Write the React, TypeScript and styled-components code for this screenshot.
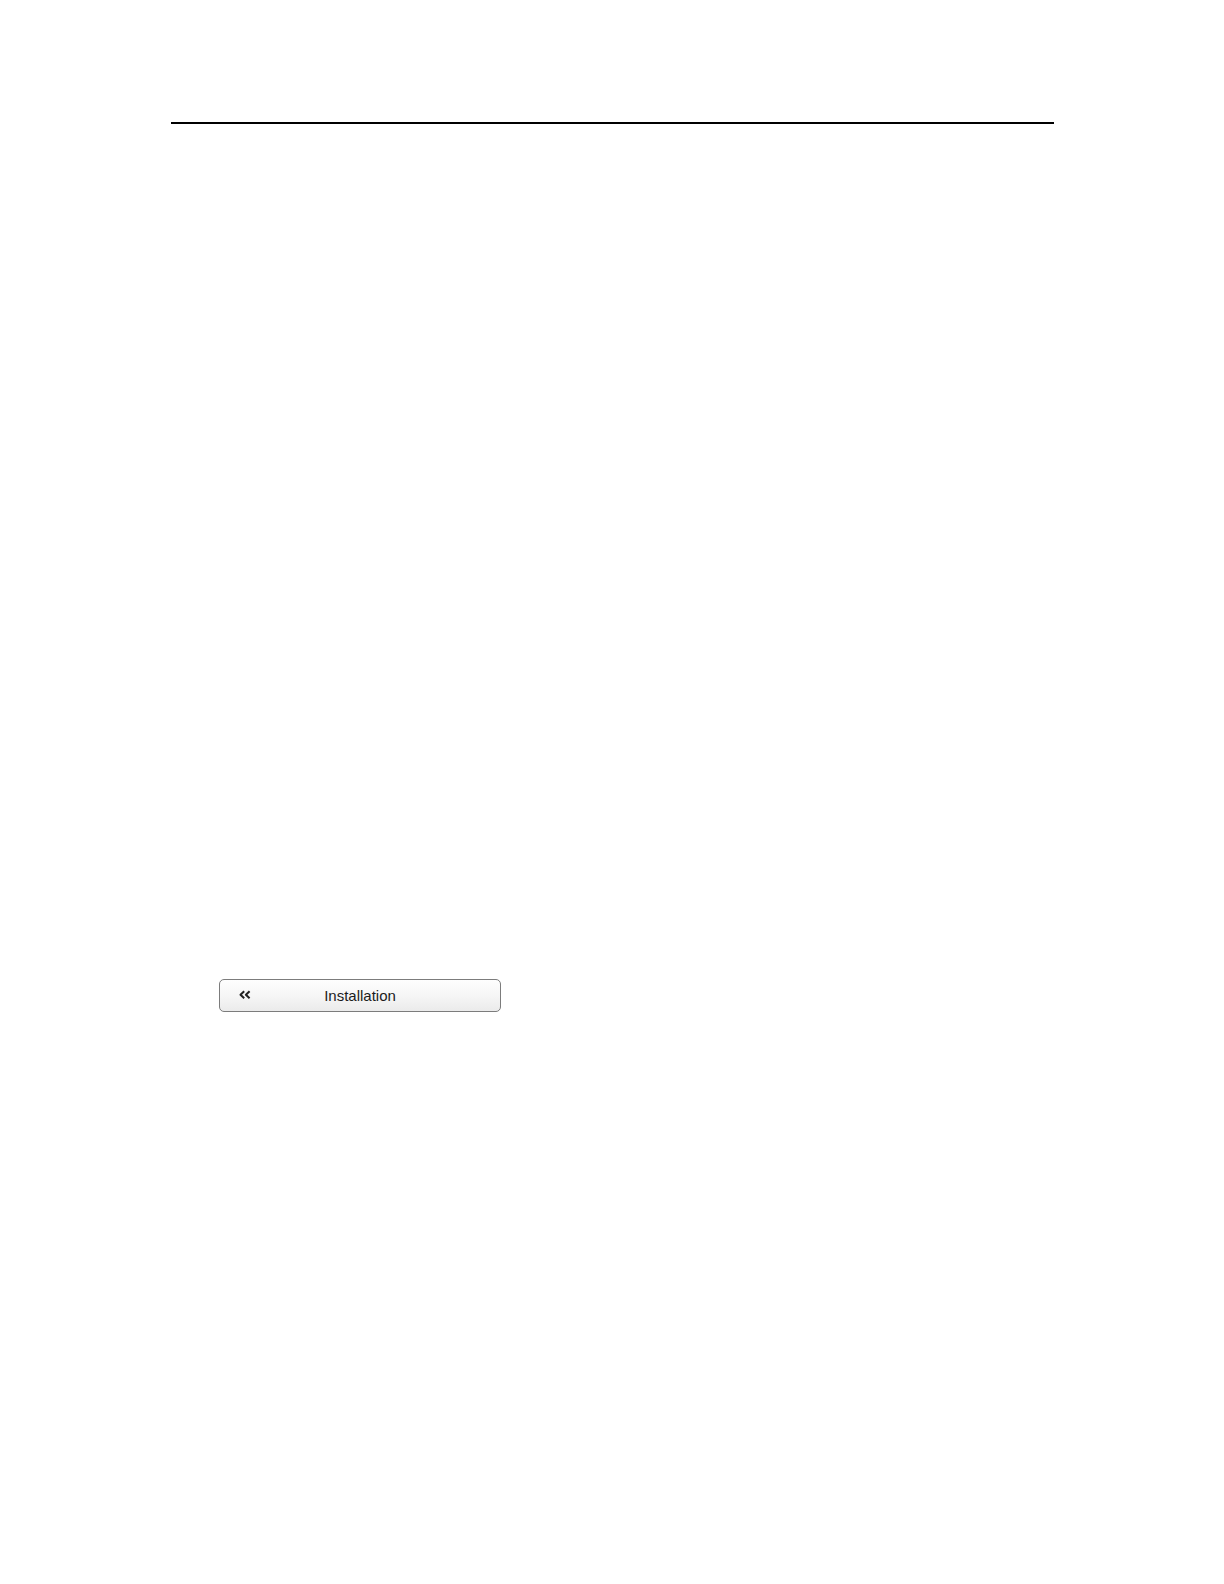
import React from "react";
import styled, { createGlobalStyle } from "styled-components";

const GlobalStyle = createGlobalStyle`
  body {
    margin: 0;
    background: #ffffff;
  }
`;

const Page = styled.main`
  box-sizing: border-box;
  min-height: 100vh;
  padding: 122px 170px 0 171px;
  font-family: "Liberation Sans", Arial, sans-serif;
`;

const Rule = styled.hr`
  height: 2px;
  margin: 0;
  border: 0;
  background: #000000;
`;

const Content = styled.section`
  padding: 855px 48px 0;
`;

const MenuButton = styled.button`
  box-sizing: border-box;
  display: grid;
  grid-template-columns: 32px 1fr 32px;
  align-items: center;
  width: 282px;
  max-width: 100%;
  height: 33px;
  padding: 0 18px;
  border: 1px solid #7c7c7c;
  border-radius: 5px;
  background: linear-gradient(#fefefe, #f6f6f6 50%, #ebebeb);
  color: #1c1c1c;
  font-family: inherit;
  font-size: 15px;
  line-height: 17px;
  text-align: center;
  cursor: pointer;
`;

const Chevrons = styled.svg`
  display: block;
  width: 14px;
  height: 13px;
  fill: none;
  stroke: #222222;
  stroke-width: 2;
  stroke-linejoin: round;
`;

export default function App() {
  return (
    <>
      <GlobalStyle />
      <Page>
        <Rule />
        <Content>
          <MenuButton type="button">
            <Chevrons viewBox="0 0 14 13" aria-hidden="true">
              <path d="M6.2 2.3 2.5 5.8 6.2 9.3M11.6 2.3 7.9 5.8l3.7 3.5" />
            </Chevrons>
            <span>Installation</span>
          </MenuButton>
        </Content>
      </Page>
    </>
  );
}
